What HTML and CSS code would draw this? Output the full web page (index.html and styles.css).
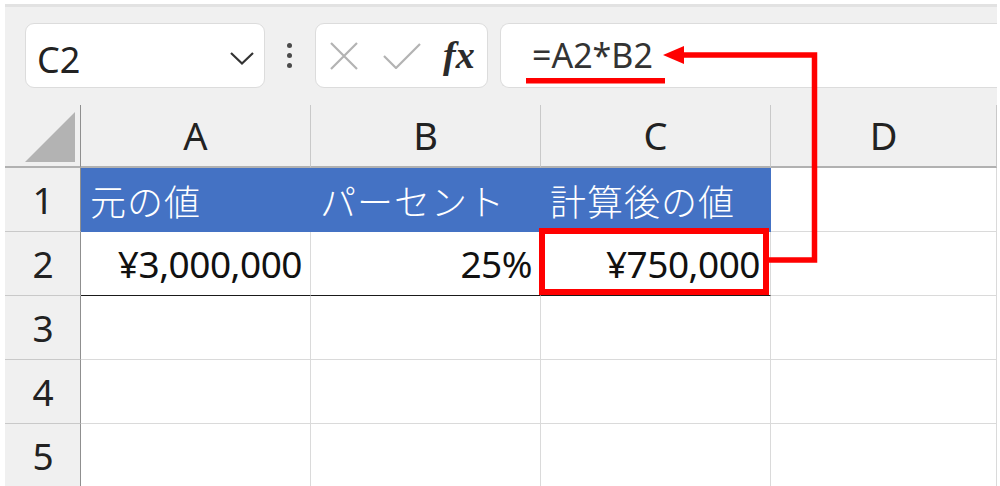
FILE: index.html
```html
<!DOCTYPE html>
<html lang="ja">
<head>
<meta charset="utf-8">
<title>Excel 計算例</title>
<link rel="stylesheet" href="styles.css">
</head>
<body>
<div class="app">
  <div class="toolbar">
    <div class="namebox">
      <span class="namebox-text">C2</span>
      <svg class="chevron" width="26" height="16" viewBox="0 0 26 16"><polyline points="2,3 13,13.5 24,3" fill="none" stroke="#333" stroke-width="2.2"/></svg>
    </div>
    <div class="dots"><span></span><span></span><span></span></div>
    <div class="fxbox">
      <svg class="icon-x" width="28" height="28" viewBox="0 0 28 28"><path d="M1 1 L27 27 M27 1 L1 27" stroke="#b3b3b3" stroke-width="2.2" fill="none"/></svg>
      <svg class="icon-check" width="38" height="26" viewBox="0 0 38 26"><path d="M1 13 L13 25 L37 1" stroke="#b3b3b3" stroke-width="2.2" fill="none"/></svg>
      <span class="fx">fx</span>
    </div>
    <div class="formula">=A2*B2</div>
  </div>
  <div class="sheet">
    <div class="corner"><div class="tri"></div></div>
    <div class="colhdr">A</div>
    <div class="colhdr">B</div>
    <div class="colhdr">C</div>
    <div class="colhdr">D</div>

    <div class="rowhdr">1</div>
    <div class="cell head">元の値</div>
    <div class="cell head">パーセント</div>
    <div class="cell head">計算後の値</div>
    <div class="cell"></div>

    <div class="rowhdr">2</div>
    <div class="cell num boxed-row">¥3,000,000</div>
    <div class="cell num boxed-row">25%</div>
    <div class="cell num boxed-row selected">¥750,000</div>
    <div class="cell"></div>

    <div class="rowhdr">3</div>
    <div class="cell"></div>
    <div class="cell"></div>
    <div class="cell"></div>
    <div class="cell"></div>

    <div class="rowhdr">4</div>
    <div class="cell"></div>
    <div class="cell"></div>
    <div class="cell"></div>
    <div class="cell"></div>

    <div class="rowhdr">5</div>
    <div class="cell"></div>
    <div class="cell"></div>
    <div class="cell"></div>
    <div class="cell"></div>
  </div>
</div>
<svg class="annot" width="1000" height="486" viewBox="0 0 1000 486">
  <rect x="526" y="78" width="139" height="5.5" fill="#ff0000"/>
  <path d="M768 260 H814.5 V55 H678" fill="none" stroke="#ff0000" stroke-width="5.5"/>
  <polygon points="663,55 684,46 684,64" fill="#ff0000"/>
</svg>
</body>
</html>
```
FILE: styles.css
```css
html, body {
  margin: 0;
  padding: 0;
  background: #ffffff;
}
body {
  width: 1000px;
  height: 486px;
  overflow: hidden;
  position: relative;
  font-family: "Noto Sans", "Noto Sans CJK JP", sans-serif;
  color: #1f1f1f;
}
.app {
  margin: 4px 3px 0 5px;
  height: 482px;
  background: #f0f0f0;
  border-top: 3px solid #e2e2e2;
  box-sizing: border-box;
  overflow: hidden;
}
.toolbar {
  display: flex;
  align-items: center;
  height: 93px;
  padding: 16px 0 12px 20px;
  box-sizing: border-box;
}
.namebox {
  width: 240px;
  height: 65px;
  box-sizing: border-box;
  background: #fff;
  border: 1px solid #dcdcdc;
  border-radius: 9px;
  display: flex;
  align-items: center;
  justify-content: space-between;
  padding: 8px 9px 0 11px;
}
.namebox-text {
  font-size: 36px;
  line-height: 1;
  color: #222;
}
.chevron {
  display: block;
  margin-top: -4px;
}
.dots {
  display: flex;
  flex-direction: column;
  gap: 5px;
  margin-left: 22px;
  width: 6px;
}
.dots span {
  width: 5px;
  height: 5px;
  border-radius: 50%;
  background: #4a4a4a;
}
.fxbox {
  margin-left: 22px;
  width: 173px;
  height: 65px;
  box-sizing: border-box;
  background: #fff;
  border: 1px solid #dcdcdc;
  border-radius: 9px;
  display: flex;
  align-items: center;
  padding-left: 14px;
}
.icon-x {
  display: block;
}
.icon-check {
  display: block;
  margin-left: 25px;
}
.fx {
  margin-left: 22px;
  font-family: "Liberation Serif", "DejaVu Serif", serif;
  font-style: italic;
  font-weight: bold;
  font-size: 38px;
  line-height: 1;
  color: #2b2b2b;
  margin-top: -2px;
}
.formula {
  margin-left: 12px;
  flex: 1;
  height: 65px;
  box-sizing: border-box;
  background: #fff;
  border: 1px solid #dcdcdc;
  border-right: none;
  border-radius: 9px 0 0 9px;
  display: flex;
  align-items: center;
  padding-left: 31px;
  font-size: 34px;
  color: #333;
  padding-bottom: 2px;
}
.sheet {
  display: grid;
  grid-template-columns: 76px 230px 230px 230px 1fr;
  grid-template-rows: 68px 64px 64px 64px 64px 64px;
}
.corner,
.colhdr {
  margin-top: 5px;
  border-bottom: 2px solid #b1b1b1;
  border-right: 1px solid #c9c9c9;
  background: #f0f0f0;
}
.corner {
  border-right-color: #8f8f8f;
  display: flex;
  align-items: flex-end;
  justify-content: flex-end;
  padding: 0 5px 4px 0;
}
.tri {
  width: 50px;
  height: 50px;
  background: #b3b3b3;
  clip-path: polygon(100% 0, 100% 100%, 0 100%);
}
.colhdr {
  display: flex;
  align-items: center;
  justify-content: center;
  font-size: 38px;
  color: #222;
  padding-bottom: 1px;
}
.rowhdr {
  background: #f0f0f0;
  border-right: 1px solid #8f8f8f;
  border-bottom: 1px solid #c9c9c9;
  display: flex;
  align-items: center;
  justify-content: center;
  font-size: 37px;
  color: #222;
  padding-left: 1px;
}
.cell {
  background: #fff;
  border-right: 1px solid #dadada;
  border-bottom: 1px solid #dadada;
  display: flex;
  align-items: center;
  font-size: 37px;
}
.head {
  background: #4472c4;
  border-right-color: #4472c4;
  border-bottom-color: #4472c4;
  color: #fff;
  padding-left: 9px;
  font-family: "Noto Sans CJK JP", sans-serif;
  font-weight: 300;
  font-size: 36px;
  letter-spacing: 1px;
}
.num {
  justify-content: flex-end;
  padding-right: 8px;
  color: #111;
  font-size: 37px;
  letter-spacing: -0.5px;
}
.boxed-row {
  border-bottom-color: #1a1a1a;
}
.selected {
  position: relative;
  padding-right: 10px;
}
.selected::after {
  content: "";
  position: absolute;
  left: -2px;
  top: -4px;
  width: 230px;
  height: 67px;
  box-sizing: border-box;
  border: 6px solid #ff0000;
}
.annot {
  position: absolute;
  left: 0;
  top: 0;
  pointer-events: none;
}
```
